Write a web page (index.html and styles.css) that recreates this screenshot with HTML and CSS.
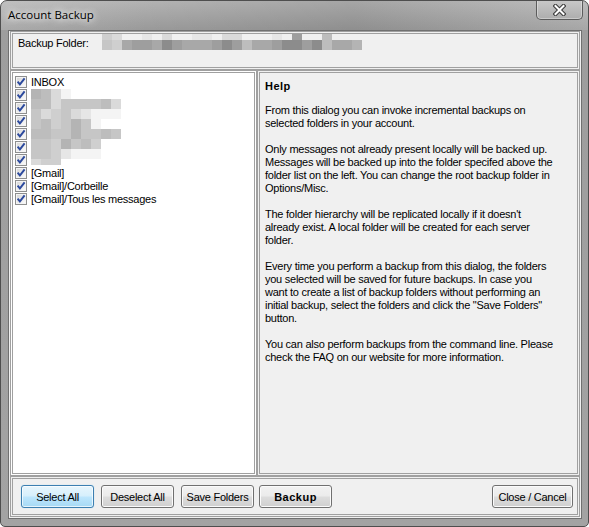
FILE: index.html
```html
<!DOCTYPE html>
<html>
<head>
<meta charset="utf-8">
<title>Account Backup</title>
<link rel="stylesheet" href="styles.css">
</head>
<body>
<svg class="defs" width="0" height="0" aria-hidden="true">
  <defs>
    <linearGradient id="cbg" x1="0" y1="0" x2="1" y2="1">
      <stop offset="0" stop-color="#d8d8d8"/>
      <stop offset="1" stop-color="#fafafa"/>
    </linearGradient>
    <symbol id="chk" viewBox="0 0 13 13">
      <rect x="0.5" y="0.5" width="11" height="11" fill="#f4f4f4" stroke="#8e8f8f"/>
      <rect x="2" y="2" width="8" height="8" fill="url(#cbg)"/>
      <path d="M2.6 5.6 L4.9 8.4 L9.6 2.4" fill="none" stroke="#2c4a9e" stroke-width="1.9" stroke-linejoin="miter"/>
    </symbol>
  </defs>
</svg>
<div class="window">
  <div class="titlebar">
    <span class="title">Account Backup</span>
    <div class="close">
      <svg width="13" height="12" viewBox="0 0 13 12">
        <path d="M2.5 2 L10.5 10 M10.5 2 L2.5 10" stroke="#3f3f3f" stroke-width="4.2" stroke-linecap="square"/>
        <path d="M2.5 2 L10.5 10 M10.5 2 L2.5 10" stroke="#ffffff" stroke-width="2" stroke-linecap="square"/>
      </svg>
    </div>
  </div>
  <div class="frame">
    <div class="client">
      <div class="panel folder">
        <span class="folder-label">Backup Folder:</span>
        <div class="path-blur">
          <i class="s4"></i><i class="s3"></i><i></i><i></i><i class="s2"></i><i></i><i class="s3"></i><i></i><i></i><i class="s2"></i><i class="s2"></i><i></i><i class="s3"></i><i class="s3"></i><i></i><i></i><i></i><i class="s2"></i><i></i><i class="s9"></i><i></i><i></i><i class="s6"></i><i></i><i></i><i></i>
          <i class="s5"></i><i class="s4"></i><i class="s8"></i><i class="s9"></i><i class="s9"></i><i class="s8"></i><i class="s10"></i><i class="s9"></i><i class="s8"></i><i class="s8"></i><i class="s8"></i><i class="s9"></i><i class="s10"></i><i class="s9"></i><i class="s6"></i><i class="s8"></i><i class="s8"></i><i class="s9"></i><i class="s10"></i><i class="s10"></i><i class="s9"></i><i class="s10"></i><i class="s6"></i><i class="s8"></i><i class="s8"></i><i class="s7"></i>
        </div>
      </div>
      <div class="middle">
        <div class="panel list">
          <div class="row"><svg class="cb"><use href="#chk"/></svg><span>INBOX</span></div>
          <div class="row"><svg class="cb"><use href="#chk"/></svg><span></span></div>
          <div class="row"><svg class="cb"><use href="#chk"/></svg><span></span></div>
          <div class="row"><svg class="cb"><use href="#chk"/></svg><span></span></div>
          <div class="row"><svg class="cb"><use href="#chk"/></svg><span></span></div>
          <div class="row"><svg class="cb"><use href="#chk"/></svg><span></span></div>
          <div class="row"><svg class="cb"><use href="#chk"/></svg><span></span></div>
          <div class="row"><svg class="cb"><use href="#chk"/></svg><span>[Gmail]</span></div>
          <div class="row"><svg class="cb"><use href="#chk"/></svg><span>[Gmail]/Corbeille</span></div>
          <div class="row"><svg class="cb"><use href="#chk"/></svg><span>[Gmail]/Tous les messages</span></div>
          <div class="list-blur">
            <i class="s7"></i><i class="s6"></i><i class="s3"></i><i class="s1"></i><i></i><i></i><i></i><i></i><i></i>
            <i class="s6"></i><i class="s6"></i><i class="s3"></i><i class="s5"></i><i class="s5"></i><i class="s5"></i><i class="s5"></i><i class="s6"></i><i class="s3"></i>
            <i class="s5"></i><i class="s3"></i><i class="s4"></i><i class="s5"></i><i class="s3"></i><i class="s2"></i><i class="s1"></i><i class="s1"></i><i class="s1"></i>
            <i class="s5"></i><i class="s6"></i><i class="s4"></i><i class="s5"></i><i class="s7"></i><i class="s5"></i><i class="s1"></i><i></i><i></i>
            <i class="s6"></i><i class="s6"></i><i class="s5"></i><i class="s5"></i><i class="s7"></i><i class="s5"></i><i class="s5"></i><i class="s6"></i><i class="s5"></i>
            <i class="s5"></i><i class="s5"></i><i class="s4"></i><i class="s7"></i><i class="s5"></i><i class="s6"></i><i class="s4"></i><i></i><i></i>
            <i class="s5"></i><i class="s5"></i><i class="s4"></i><i class="s2"></i><i class="s1"></i><i class="s1"></i><i class="s1"></i><i></i><i></i>
            <i class="s3"></i><i class="s4"></i><i class="s4"></i><i></i><i></i><i></i><i></i><i></i><i></i>
          </div>
        </div>
        <div class="panel help">
          <div class="help-title">Help</div>
          <p>From this dialog you can invoke incremental backups on<br>selected folders in your account.</p>
          <p>Only messages not already present locally will be backed up.<br>Messages will be backed up into the folder specifed above the<br>folder list on the left. You can change the root backup folder in<br>Options/Misc.</p>
          <p>The folder hierarchy will be replicated locally if it doesn't<br>already exist. A local folder will be created for each server<br>folder.</p>
          <p>Every time you perform a backup from this dialog, the folders<br>you selected will be saved for future backups. In case you<br>want to create a list of backup folders without performing an<br>initial backup, select the folders and click the "Save Folders"<br>button.</p>
          <p>You can also perform backups from the command line. Please<br>check the FAQ on our website for more information.</p>
        </div>
      </div>
      <div class="panel buttons">
        <button class="btn btn-select focused">Select All</button>
        <button class="btn btn-deselect">Deselect All</button>
        <button class="btn btn-save">Save Folders</button>
        <button class="btn btn-backup">Backup</button>
        <button class="btn btn-close">Close / Cancel</button>
      </div>
    </div>
  </div>
</div>
</body>
</html>
```
FILE: styles.css
```css
* { box-sizing: border-box; }
html, body { margin: 0; padding: 0; background: #ffffff; }
body {
  font-family: "Liberation Sans", Arial, sans-serif;
  font-size: 11px;
  letter-spacing: -0.25px;
  color: #000;
}
.defs { position: absolute; width: 0; height: 0; }

.window {
  width: 589px;
  height: 527px;
  border: 1px solid #4e4e4e;
  border-radius: 7px 7px 5px 5px;
  background: linear-gradient(to bottom, #b6b6b6 0, #9d9d9d 28px, #a3a3a3 100%);
  display: flex;
  flex-direction: column;
  overflow: hidden;
}

.titlebar {
  height: 29px;
  flex: none;
  display: flex;
  align-items: flex-start;
  padding-left: 7px;
  background: linear-gradient(to right, rgba(255,255,255,0.14) 0, rgba(0,0,0,0.02) 25%, rgba(0,0,0,0.09) 60%, rgba(255,255,255,0.1) 100%);
}
.title {
  font-family: "Open Sans", "Noto Sans", sans-serif;
  font-size: 11.5px;
  letter-spacing: 0;
  line-height: 27px;
  color: #000;
  text-shadow: 0 0 6px rgba(255,255,255,0.95), 0 0 10px rgba(255,255,255,0.7), 0 0 14px rgba(255,255,255,0.5);
}
.close {
  margin-left: auto;
  margin-right: 5px;
  margin-top: -1px;
  width: 47px;
  height: 20px;
  border: 1px solid #5c5c5c;
  border-top: none;
  border-radius: 0 0 5px 5px;
  background: linear-gradient(to bottom, #c9c9c9, #adadad);
  box-shadow: inset 0 0 0 1px rgba(255,255,255,0.35);
  display: flex;
  align-items: center;
  justify-content: center;
}

.frame {
  flex: 1;
  display: flex;
  padding: 0 6px 7px 7px;
}
.client {
  flex: 1;
  border: 1px solid #707070;
  background: #f0f0f0;
  padding: 0 1px 1px;
  display: flex;
  flex-direction: column;
}

.panel {
  border: 3px double #a0a0a0;
}

.folder {
  height: 39px;
  flex: none;
  display: flex;
  align-items: flex-start;
  padding-left: 5px;
}
.folder-label {
  width: 84px;
  margin-top: 3px;
  line-height: 13px;
  flex: none;
}
.path-blur {
  display: grid;
  grid-template-columns: repeat(26, 10px);
  grid-template-rows: 6px 10px;
}
i { display: block; }
.s1 { background: #f4f4f4; }
.s2 { background: #e6e6e6; }
.s3 { background: #dadada; }
.s4 { background: #cfcfcf; }
.s5 { background: #c6c6c6; }
.s6 { background: #bdbdbd; }
.s7 { background: #b4b4b4; }
.s8 { background: #a8a8a8; }
.s9 { background: #9e9e9e; }
.s10 { background: #8c8c8c; }

.middle {
  height: 406px;
  flex: none;
  display: flex;
}
.list {
  width: 247px;
  flex: none;
  background: #ffffff;
  padding: 3px 0 0 2px;
  position: relative;
}
.row {
  height: 13px;
  display: flex;
  align-items: flex-start;
  line-height: 13px;
  white-space: nowrap;
}
.cb {
  width: 13px;
  height: 13px;
  flex: none;
  margin-right: 3px;
}
.list-blur {
  position: absolute;
  left: 18px;
  top: 16px;
  display: grid;
  grid-template-columns: repeat(9, 10px);
  grid-template-rows: repeat(7, 10px) 6px;
}

.help {
  flex: 1;
  padding: 7px 0 0 5px;
  white-space: nowrap;
}
.help-title {
  font-weight: bold;
  letter-spacing: 0.5px;
  line-height: 13px;
  margin-bottom: 11px;
}
.help p {
  margin: 0 0 13px;
  line-height: 13px;
}

.buttons {
  flex: 1;
  display: flex;
  align-items: flex-start;
  padding: 6px 4px 0 8px;
}
.btn {
  height: 23px;
  font-family: "Liberation Sans", Arial, sans-serif;
  font-size: 11px;
  letter-spacing: -0.25px;
  color: #000;
  border: 1px solid #707070;
  border-radius: 3px;
  background: linear-gradient(to bottom, #f2f2f2 0%, #ebebeb 48%, #dddddd 52%, #cfcfcf 100%);
  box-shadow: inset 0 0 0 1px #fbfbfb;
  padding: 0;
  flex: none;
}
.btn.focused {
  border-color: #3c7fb1;
  background: linear-gradient(to bottom, #e8f6fd 0%, #d6effc 48%, #bde6fd 52%, #a6d9f4 100%);
  box-shadow: inset 0 0 0 1px rgba(255,255,255,0.7), 0 0 1px #8fd0f3;
}
.btn-select { width: 73px; margin-right: 7px; }
.btn-deselect { width: 73px; margin-right: 7px; }
.btn-save { width: 73px; margin-right: 5px; }
.btn-backup { width: 73px; font-weight: bold; letter-spacing: 0.5px; }
.btn-close { width: 81px; margin-left: auto; }
```
